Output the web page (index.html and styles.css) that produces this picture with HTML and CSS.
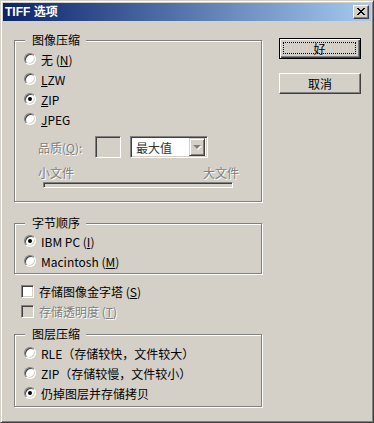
FILE: index.html
```html
<!DOCTYPE html>
<html>
<head>
<meta charset="utf-8">
<title>TIFF 选项</title>
<link rel="stylesheet" href="styles.css">
</head>
<body>
<div class="window">
    <div class="titlebar">
        <span class="title">TIFF 选项</span>
        <span class="close-btn">
            <svg width="8" height="7" viewBox="0 0 8 7"><path d="M0 0h2v1H0zM6 0h2v1H6zM1 1h2v1H1zM5 1h2v1H5zM2 2h4v1H2zM3 3h2v1H3zM2 4h4v1H2zM1 5h2v1H1zM5 5h2v1H5zM0 6h2v1H0zM6 6h2v1H6z" fill="#000"/></svg>
        </span>
    </div>
    <div class="main">
        <div class="left">
            <fieldset class="group group-image">
                <legend>图像压缩</legend>
                <div class="opts">
                    <label class="opt"><span class="radio"></span>无 (<u>N</u>)</label>
                    <label class="opt"><span class="radio"></span><u>L</u>ZW</label>
                    <label class="opt"><span class="radio checked"></span><u>Z</u>IP</label>
                    <label class="opt"><span class="radio"></span><u>J</u>PEG</label>
                </div>
                <div class="quality">
                    <span class="q-label dis">品质(<u>Q</u>):</span>
                    <span class="q-box"></span>
                    <span class="select">
                        <span class="sel-text">最大值</span>
                        <span class="sel-btn"><span class="arrow"></span></span>
                    </span>
                </div>
                <div class="slider-labels dis"><span>小文件</span><span>大文件</span></div>
                <div class="track"></div>
            </fieldset>

            <fieldset class="group group-order">
                <legend>字节顺序</legend>
                <div class="opts">
                    <label class="opt"><span class="radio checked"></span>IBM PC (<u>I</u>)</label>
                    <label class="opt"><span class="radio"></span>Macintosh (<u>M</u>)</label>
                </div>
            </fieldset>

            <div class="checks">
                <label class="chk"><span class="box"></span>存储图像金字塔 (<u>S</u>)</label>
                <label class="chk dis"><span class="box disabled"></span>存储透明度 (<u>T</u>)</label>
            </div>

            <fieldset class="group group-layer">
                <legend>图层压缩</legend>
                <div class="opts">
                    <label class="opt"><span class="radio"></span>RLE（存储较快，文件较大）</label>
                    <label class="opt"><span class="radio"></span>ZIP（存储较慢，文件较小）</label>
                    <label class="opt"><span class="radio checked"></span>仍掉图层并存储拷贝</label>
                </div>
            </fieldset>
        </div>
        <div class="right">
            <button class="btn default"><span class="focus">好</span></button>
            <button class="btn">取消</button>
        </div>
    </div>
</div>
</body>
</html>
```

FILE: styles.css
```css
body {
    margin: 0;
    font-family: "Noto Sans CJK SC", "Liberation Sans", sans-serif;
    font-size: 12px;
    color: #000;
}
.window {
    width: 374px;
    height: 423px;
    box-sizing: border-box;
    background-color: #D4D0C8;
    border: 1px solid;
    border-color: #D4D0C8 #404040 #404040 #D4D0C8;
    box-shadow: inset 1px 1px 0 #FFFFFF, inset -1px -1px 0 #808080;
    padding: 2px;
}
.titlebar {
    height: 18px;
    display: flex;
    align-items: center;
    justify-content: space-between;
    background: linear-gradient(to right, #0A246A, #A6CAF0);
    padding: 0 2px 0 2px;
}
.title {
    color: white;
    font-weight: bold;
    font-size: 12px;
    line-height: 14px;
    font-family: "Liberation Sans", "Noto Sans CJK SC", sans-serif;
}
.close-btn {
    width: 16px;
    height: 14px;
    box-sizing: border-box;
    background-color: #D4D0C8;
    border: 1px solid;
    border-color: #FFFFFF #404040 #404040 #FFFFFF;
    box-shadow: inset -1px -1px 0 #808080;
    display: flex;
    align-items: center;
    justify-content: center;
    padding: 0 1px 1px 0;
}
.close-btn svg {
    display: block;
}
.main {
    display: flex;
    padding: 12px 0 0 11px;
}
.left {
    width: 249px;
}
.right {
    margin-left: 16px;
    padding-top: 5px;
    display: flex;
    flex-direction: column;
    gap: 14px;
}

/* group box */
.group {
    width: 248px;
    box-sizing: border-box;
    margin: 0;
    padding: 0;
    min-width: 0;
    border: 1px solid #808080;
    box-shadow: inset 1px 1px 0 #FFFFFF, 1px 1px 0 #FFFFFF;
}
.group legend {
    margin-left: 10px;
    padding: 0 6px 0 7px;
    line-height: 14px;
    height: 14px;
    background-color: #D4D0C8;
}
.group-image {
    padding-bottom: 13px;
}
.group-image .opts {
    padding-top: 2px;
}
.group-order {
    margin-top: 14px;
    padding-bottom: 2px;
}
.group-order .opts {
    padding-top: 1px;
}
.group-layer {
    margin-top: 6px;
    padding-bottom: 3px;
}
.group-layer .opts {
    padding-top: 2px;
}
.opt {
    display: flex;
    align-items: center;
    height: 20px;
    padding-left: 9px;
    white-space: nowrap;
}
.radio {
    width: 12px;
    height: 12px;
    box-sizing: border-box;
    border-radius: 50%;
    background-color: #FFFFFF;
    border: 1px solid;
    border-color: #808080 #FFFFFF #FFFFFF #808080;
    box-shadow: inset 1px 1px 0 #404040, inset -1px -1px 0 #D4D0C8;
    margin-right: 5px;
    display: flex;
    align-items: center;
    justify-content: center;
    flex: none;
}
.radio.checked::after {
    content: "";
    width: 4px;
    height: 4px;
    border-radius: 50%;
    background-color: #000;
}

/* disabled text */
.dis {
    color: #808080;
    text-shadow: 1px 1px 0 #FFFFFF;
}

.quality {
    display: flex;
    align-items: center;
    height: 22px;
    margin-top: 7px;
    padding-left: 23px;
}
.q-label {
    width: 57px;
    white-space: nowrap;
}
.q-box {
    width: 26px;
    height: 22px;
    box-sizing: border-box;
    border: 1px solid;
    border-color: #808080 #FFFFFF #FFFFFF #808080;
    box-shadow: inset 1px 1px 0 #404040, inset -1px -1px 0 #D4D0C8;
    background-color: #D4D0C8;
    margin-right: 9px;
}
.select {
    width: 78px;
    height: 22px;
    box-sizing: border-box;
    border: 1px solid;
    border-color: #808080 #FFFFFF #FFFFFF #808080;
    box-shadow: inset 1px 1px 0 #404040, inset -1px -1px 0 #D4D0C8;
    background-color: #FFFFFF;
    padding: 2px;
    display: flex;
    align-items: center;
    justify-content: space-between;
}
.sel-text {
    padding-left: 3px;
    color: #333333;
}
.sel-btn {
    width: 16px;
    height: 18px;
    box-sizing: border-box;
    background-color: #D4D0C8;
    border: 1px solid;
    border-color: #D4D0C8 #404040 #404040 #D4D0C8;
    box-shadow: inset 1px 1px 0 #FFFFFF, inset -1px -1px 0 #808080;
    display: flex;
    align-items: center;
    justify-content: center;
}
.arrow {
    width: 0;
    height: 0;
    border-left: 4px solid transparent;
    border-right: 4px solid transparent;
    border-top: 4px solid #808080;
    filter: drop-shadow(1px 1px 0 #FFFFFF);
}
.slider-labels {
    display: flex;
    justify-content: space-between;
    width: 201px;
    margin: 8px 0 0 23px;
    line-height: 14px;
}
.track {
    width: 190px;
    height: 6px;
    box-sizing: border-box;
    margin: 2px 0 0 28px;
    border: 1px solid;
    border-color: #808080 #FFFFFF #FFFFFF #808080;
    box-shadow: inset 1px 1px 0 #404040;
    background-color: #D4D0C8;
}

/* checkboxes */
.checks {
    margin-top: 7px;
}
.chk {
    display: flex;
    align-items: center;
    height: 20px;
    padding-left: 7px;
}
.box {
    width: 13px;
    height: 13px;
    box-sizing: border-box;
    background-color: #FFFFFF;
    border: 1px solid;
    border-color: #808080 #FFFFFF #FFFFFF #808080;
    box-shadow: inset 1px 1px 0 #404040, inset -1px -1px 0 #D4D0C8;
    margin-right: 5px;
    flex: none;
}
.box.disabled {
    background-color: #D4D0C8;
}

/* buttons */
.btn {
    width: 82px;
    height: 21px;
    box-sizing: border-box;
    margin: 0;
    padding: 0;
    font-family: inherit;
    font-size: 12px;
    color: #000;
    background-color: #D4D0C8;
    border: 1px solid;
    border-color: #FFFFFF #404040 #404040 #FFFFFF;
    box-shadow: inset -1px -1px 0 #808080;
    display: flex;
    align-items: center;
    justify-content: center;
}
.btn.default {
    border: 1px solid #000;
    box-shadow: inset 1px 1px 0 #FFFFFF, inset -1px -1px 0 #404040, inset -2px -2px 0 #808080;
    padding: 3px 4px 4px 3px;
}
.focus {
    flex: 1;
    align-self: stretch;
    border: 1px dotted #000;
    display: flex;
    align-items: center;
    justify-content: center;
}
```
